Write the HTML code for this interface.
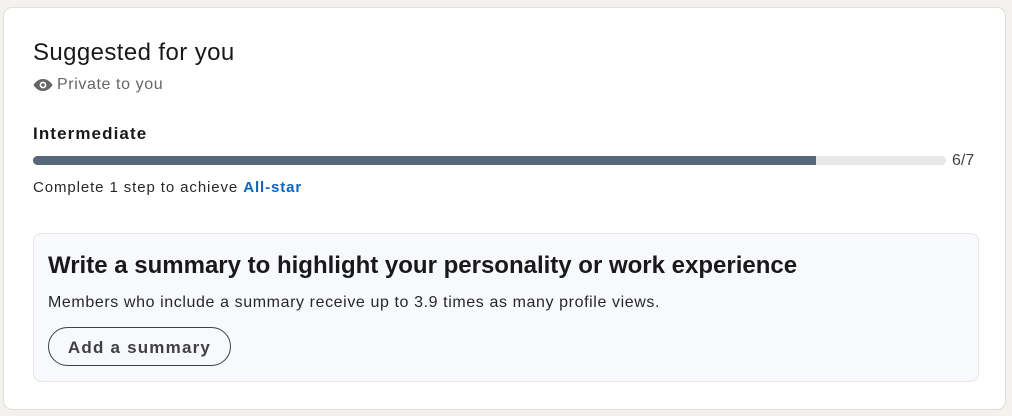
<!DOCTYPE html>
<html><head><style>
body{margin:0;width:1012px;height:416px;background:#f3f2ef;font-family:"Liberation Sans",sans-serif;position:relative;overflow:hidden}
.card{position:absolute;left:3px;top:7px;width:1003px;height:403px;background:#fff;border:1px solid #e0dfdc;border-radius:9px;box-sizing:border-box}
.a{position:absolute;white-space:nowrap}
</style></head><body>
<div class="card"></div>
<div class="a" style="left:33px;top:39px;font-size:24px;letter-spacing:0.4px;color:rgba(0,0,0,.9)">Suggested for you</div>
<svg class="a" style="left:33px;top:78px" width="20" height="14" viewBox="0 0 20 14"><path d="M10 1C5 1 1.5 5 0.5 7 1.5 9 5 13 10 13s8.5-4 9.5-6C18.5 5 15 1 10 1z" fill="#666"/><circle cx="10" cy="7" r="3.4" fill="#fff"/><circle cx="10" cy="7" r="1.8" fill="#666"/></svg>
<div class="a" style="left:57px;top:76px;font-size:16px;letter-spacing:0.6px;color:#666">Private to you</div>
<div class="a" style="left:33px;top:124px;font-size:17px;letter-spacing:1.1px;font-weight:600;color:rgba(0,0,0,.9)">Intermediate</div>
<div class="a" style="left:33px;top:156px;width:913px;height:9px;background:#e8e8e8;border-radius:5px"></div>
<div class="a" style="left:33px;top:156px;width:783px;height:9px;background:#56687a;border-radius:5px 0 0 5px"></div>
<div class="a" style="left:952px;top:152px;font-size:16px;color:rgba(0,0,0,.75)">6/7</div>
<div class="a" style="left:33px;top:179px;font-size:15px;letter-spacing:0.9px;color:rgba(0,0,0,.85)">Complete 1 step to achieve <b style="color:#0a66c2">All-star</b></div>
<div class="a" style="left:33px;top:233px;width:946px;height:149px;background:#f8f9fc;border:1px solid #e6e6e6;border-radius:8px;box-sizing:border-box"></div>
<div class="a" style="left:48px;top:252px;font-size:24px;font-weight:600;color:rgba(0,0,0,.9)">Write a summary to highlight your personality or work experience</div>
<div class="a" style="left:48px;top:294px;font-size:16px;letter-spacing:0.6px;color:rgba(0,0,0,.85)">Members who include a summary receive up to 3.9 times as many profile views.</div>
<div class="a" style="left:48px;top:327px;width:183px;height:39px;border:1px solid #404040;border-radius:20px;box-sizing:border-box;font-size:17px;letter-spacing:1.2px;font-weight:600;color:#404040;text-align:center;line-height:39px">Add a summary</div>
</body></html>
